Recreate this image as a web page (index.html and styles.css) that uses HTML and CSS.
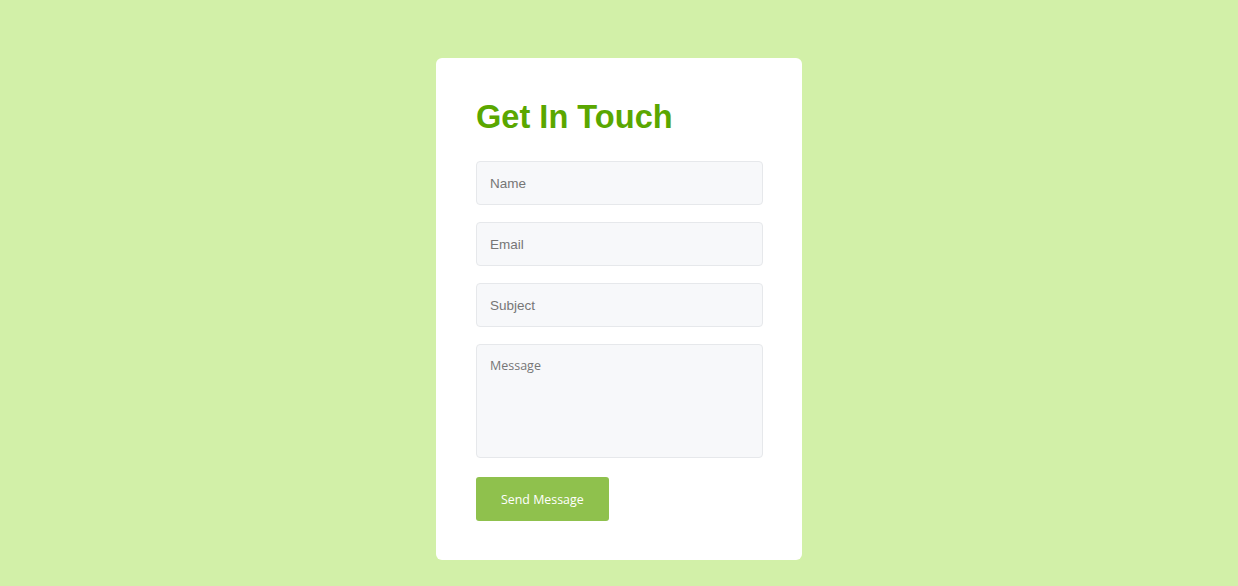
FILE: index.html
```html
<!DOCTYPE html>
<html lang="en">
<head>
<meta charset="utf-8">
<title>Get In Touch</title>
<link rel="stylesheet" href="styles.css">
</head>
<body>
<main class="page">
  <form class="card">
    <h1 class="title">Get In Touch</h1>
    <input class="field" type="text" placeholder="Name">
    <input class="field" type="email" placeholder="Email">
    <input class="field" type="text" placeholder="Subject">
    <textarea class="field area" placeholder="Message"></textarea>
    <button class="btn" type="button">Send Message</button>
  </form>
</main>
</body>
</html>
```
FILE: styles.css
```css
* { box-sizing: border-box; }
html, body { margin: 0; padding: 0; }
body {
  background: #d2f0a8;
  font-family: "Liberation Sans", Arial, sans-serif;
  min-height: 586px;
}
.page {
  display: flex;
  justify-content: center;
  padding-top: 58px;
}
.card {
  width: 366px;
  background: #ffffff;
  border-radius: 6px;
  padding: 40px 40px 39px;
  display: flex;
  flex-direction: column;
  align-items: flex-start;
}
.title {
  margin: 0 0 26px;
  font-size: 32.6px;
  line-height: 37px;
  font-weight: 700;
  color: #5aa700;
}
.field {
  width: 287px;
  height: 44px;
  margin: 0 0 17px;
  padding: 0 13px;
  background: #f7f8fa;
  border: 1px solid #e6e8eb;
  border-radius: 4px;
  font-family: "Liberation Sans", Arial, sans-serif;
  font-size: 13.5px;
  color: #333;
  outline: none;
}
.field::placeholder { color: #767676; }
.area {
  height: 114px;
  padding: 12px 13px;
  resize: none;
  font-family: "Open Sans", sans-serif;
  font-size: 12.5px;
  margin-bottom: 19px;
}
.btn {
  height: 44px;
  padding: 0 25px;
  background: #8fc14d;
  color: #ffffff;
  border: none;
  border-radius: 3px;
  font-family: "Open Sans", sans-serif;
  font-size: 12.4px;
  cursor: pointer;
}
```
